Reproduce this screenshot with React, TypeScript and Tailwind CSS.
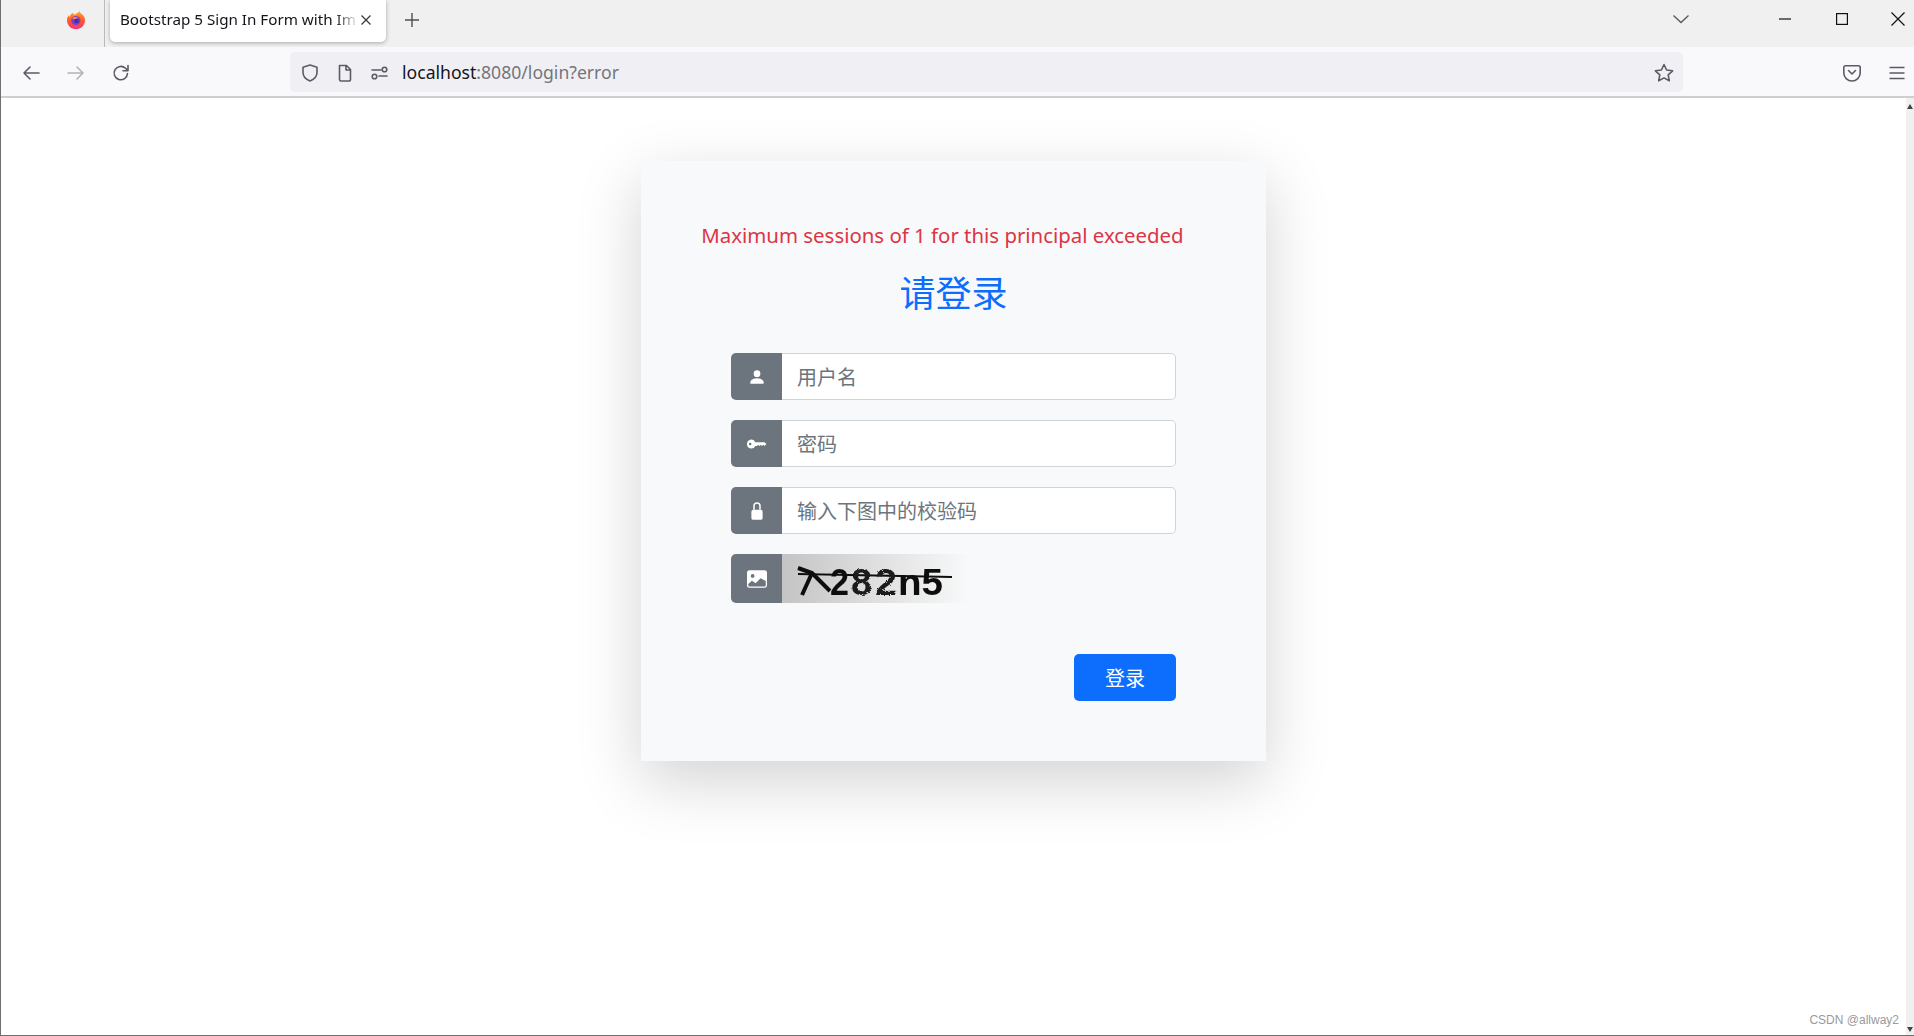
import React from "react";

const ff = { sans: "font-['Noto_Sans','Noto_Sans_CJK_SC',sans-serif]" };

function Firefox() {
  return (
    <svg width="20" height="20" viewBox="0 0 20 20">
      <defs>
        <linearGradient id="ffg" x1="0" y1="0" x2="0" y2="1">
          <stop offset="0" stopColor="#ffb01f" />
          <stop offset="0.5" stopColor="#ff5a2b" />
          <stop offset="1" stopColor="#f0377b" />
        </linearGradient>
      </defs>
      <path d="M13 0.8c.3 1.6 1.4 2.2 2.6 3.3 2 1.6 3.4 3.6 3.4 6.1 0 5-4 9-9 9s-9-4-9-9c0-2 .6-3.8 1.7-5.3.1 1 .5 1.6 1 2 .5-2.4 2.1-3.6 4-4.1-.5 1 -.3 1.6 .4 2 1.7-.6 3.4-1.7 5.9-4z" fill="url(#ffg)" />
      <circle cx="9.8" cy="10.5" r="4.6" fill="#7a3ec8" />
      <path d="M6 8.2c1.5-1.4 5-1.6 6.6.3-1.8-.5-2.6.3-3.4.8-1 .1-2.2-.4-3.2-1.1z" fill="#ff8a3c" />
      <circle cx="10.5" cy="11" r="2.3" fill="#4b2ba8" />
    </svg>
  );
}

const iconStroke = "#5b5b66";

function Icon({ children, size = 20 }: { children: React.ReactNode; size?: number }) {
  return (
    <svg width={size} height={size} viewBox="0 0 20 20" fill="none" stroke={iconStroke} strokeWidth="1.6" strokeLinecap="round" strokeLinejoin="round">
      {children}
    </svg>
  );
}

function BsInput({ placeholder, icon }: { placeholder: string; icon: React.ReactNode }) {
  return (
    <div className="flex h-[47px] w-full">
      <div className="flex w-[51px] shrink-0 items-center justify-center rounded-l-[5px] bg-[#6c757d]">{icon}</div>
      <input
        readOnly
        placeholder={placeholder}
        className="h-full min-w-0 flex-1 rounded-r-[5px] border border-[#ced4da] border-l-0 bg-white px-[15px] pt-[1px] text-[20px] outline-none placeholder:text-[#6c757d]"
      />
    </div>
  );
}

function Captcha() {
  const font = "'Liberation Sans',sans-serif";
  return (
    <svg width="188" height="49" viewBox="0 0 188 49" className="block">
      <defs>
        <linearGradient id="cap" x1="0" y1="0" x2="1" y2="0">
          <stop offset="0" stopColor="#c4c4c4" />
          <stop offset="0.55" stopColor="#e2e2e2" />
          <stop offset="1" stopColor="#f8f9fa" />
        </linearGradient>
        <filter id="soft" x="-5%" y="-5%" width="110%" height="110%">
          <feGaussianBlur stdDeviation="0.5" />
        </filter>
        <filter id="noisy" x="-5%" y="-5%" width="110%" height="110%">
          <feTurbulence type="fractalNoise" baseFrequency="0.7" numOctaves="2" seed="3" />
          <feDisplacementMap in="SourceGraphic" scale="3" />
          <feGaussianBlur stdDeviation="0.4" />
        </filter>
      </defs>
      <rect width="188" height="49" fill="url(#cap)" />
      <g filter="url(#soft)">
        <path d="M16 14 L30 19 L48 37 M30 19 L20 41" stroke="#111" strokeWidth="4" fill="none" />
        <text x="48" y="41" fontFamily={font} fontWeight="700" fontSize="36" fill="#111" textLength="19" lengthAdjust="spacingAndGlyphs">2</text>
        <text x="116" y="41" fontFamily={font} fontWeight="700" fontSize="36" fill="#111" textLength="45" lengthAdjust="spacingAndGlyphs">n5</text>
        <path d="M16 20 L170 23" stroke="#111" strokeWidth="2" />
      </g>
      <g filter="url(#noisy)">
        <text x="69" y="41" fontFamily={font} fontWeight="700" fontSize="37" fill="#1a1a1a" textLength="21" lengthAdjust="spacingAndGlyphs">8</text>
        <text x="93" y="41" fontFamily={font} fontWeight="700" fontSize="37" fill="#1a1a1a" textLength="22" lengthAdjust="spacingAndGlyphs">2</text>
      </g>
    </svg>
  );
}

export default function App() {
  return (
    <div className={`flex h-[1036px] w-[1914px] flex-col overflow-hidden border-l border-b border-[#6f6f6f] bg-white ${ff.sans}`}>
      {/* Tab strip */}
      <div className="flex h-[47px] shrink-0 items-start bg-[#f0f0f0]">
        <div className="flex h-[47px] w-[104px] items-center justify-end border-r border-[#b9b9b9] pr-[18px] pb-[8px]">
          <Firefox />
        </div>
        <div className="ml-[5px] flex h-[42px] w-[276px] items-center rounded-b-[5px] bg-white pl-[10px] pb-[2px] shadow-[0_1px_4px_rgba(0,0,0,0.3)]">
          <span className="-mt-[2px] w-[239px] whitespace-nowrap text-[15.2px] text-[#15141a] [mask-image:linear-gradient(to_right,black_90%,transparent)]">
            Bootstrap 5 Sign In Form with Im
          </span>
          <svg width="14" height="14" viewBox="0 0 14 14" stroke="#3a3a44" strokeWidth="1.3">
            <path d="M2.5 2.5l9 9M11.5 2.5l-9 9" />
          </svg>
        </div>
        <div className="ml-[18px] flex h-[40px] items-center">
          <svg width="16" height="16" viewBox="0 0 16 16" stroke="#4f4f58" strokeWidth="1.4">
            <path d="M8 1v14M1 8h14" />
          </svg>
        </div>
        <div className="flex-1" />
        <div className="flex h-[38px] items-center">
          <svg width="18" height="10" viewBox="0 0 18 10" fill="none" stroke="#5b5b66" strokeWidth="1.4" className="mr-[89px]">
            <path d="M1.5 1.5L9 8.5l7.5-7" />
          </svg>
          <svg width="12" height="2" viewBox="0 0 12 2" stroke="#111" strokeWidth="1.2" className="mr-[45px]">
            <path d="M0 1h12" />
          </svg>
          <svg width="12" height="12" viewBox="0 0 12 12" fill="none" stroke="#111" strokeWidth="1.2" className="mr-[43px]">
            <rect x="0.6" y="0.6" width="10.8" height="10.8" />
          </svg>
          <svg width="14" height="14" viewBox="0 0 14 14" stroke="#111" strokeWidth="1.2" className="mr-[9px]">
            <path d="M0.5 0.5l13 13M13.5 0.5l-13 13" />
          </svg>
        </div>
      </div>

      {/* Toolbar */}
      <div className="flex h-[51px] shrink-0 items-center border-b-2 border-[#cfcfd3] bg-[#f9f9fb]">
        <div className="flex w-[289px] items-center pl-[20px] pt-[2px]">
          <Icon>
            <path d="M18 10H3M9 4l-6 6 6 6" />
          </Icon>
          <div className="ml-[25px]">
            <svg width="20" height="20" viewBox="0 0 20 20" fill="none" stroke="#b3b3ba" strokeWidth="1.6" strokeLinecap="round" strokeLinejoin="round">
              <path d="M2 10h15M11 4l6 6-6 6" />
            </svg>
          </div>
          <div className="ml-[25px]">
            <Icon>
              <path d="M16.5 10.5a6.7 6.7 0 1 1-2-5.2L17 7.7M17 2.5v5.2h-5" />
            </Icon>
          </div>
        </div>
        <div className="flex h-[40px] w-[1393px] items-center rounded-[5px] bg-[#f0f0f4] pl-[10px] pt-[2px]">
          <Icon>
            <path d="M10 2l7 2.3v5c0 4.4-3 7.2-7 8.7-4-1.5-7-4.3-7-8.7v-5z" />
          </Icon>
          <div className="ml-[15px]">
            <Icon>
              <path d="M4.5 2.5h7l4 4v10a1.5 1.5 0 0 1-1.5 1.5H6a1.5 1.5 0 0 1-1.5-1.5zM11 2.5v4.500h4.500" />
            </Icon>
          </div>
          <div className="ml-[15px]">
            <Icon>
              <path d="M2 7h9M17 13H9" />
              <circle cx="14.500" cy="6.500" r="2.300" />
              <circle cx="4.500" cy="13.500" r="2.300" />
            </Icon>
          </div>
          <span className="ml-[12px] text-[17.6px] text-[#15141a]">
            localhost<span className="text-[#74747c]">:8080/login?error</span>
          </span>
          <div className="flex-1" />
          <svg width="22" height="22" viewBox="0 0 22 22" fill="none" stroke={iconStroke} strokeWidth="1.6" strokeLinejoin="round" className="mr-[8px]">
            <path d="M11 2.500l2.600 5.500 6 .8-4.400 4.100 1.100 5.900-5.300-2.900-5.300 2.900 1.100-5.900-4.400-4.100 6-.8z" />
          </svg>
        </div>
        <div className="flex-1" />
        <div className="mr-[9px] flex items-center gap-[27px] pt-[2px]">
          <Icon>
            <path d="M3.500 2.800h13a1.700 1.700 0 0 1 1.700 1.700v5.300a8.200 8.200 0 0 1-16.400 0V4.500a1.700 1.700 0 0 1 1.700-1.700z" />
            <path d="M6.500 7.500L10 11l3.500-3.500" />
          </Icon>
          <svg width="16" height="14" viewBox="0 0 16 14" stroke={iconStroke} strokeWidth="1.500">
            <path d="M0.500 1.500h15M0.500 7h15M0.500 12.500h15" />
          </svg>
        </div>
      </div>

      {/* Page */}
      <div className="relative flex min-h-0 flex-1">
        <div className="flex min-w-0 flex-1 justify-center pt-[63px]">
          <div className="flex h-[600px] w-[625px] flex-col items-center bg-[#f8f9fa] pt-[59px] shadow-[0_20px_60px_rgba(0,0,0,0.175)]">
            <p className="mr-[22px] h-[30px] whitespace-nowrap text-[20.4px] leading-[30px] text-[#dc3545]">Maximum sessions of 1 for this principal exceeded</p>
            <h3 className="mt-[23px] h-[42px] text-[36px] font-normal leading-[42px] text-[#0d6efd]">请登录</h3>
            <form className="mt-[38px] flex w-[445px] flex-col">
              <BsInput
                placeholder="用户名"
                icon={
                  <svg width="18" height="18" viewBox="0 0 16 16" fill="white">
                    <path d="M3 14s-1 0-1-1 1-4 6-4 6 3 6 4-1 1-1 1H3zm5-6a3 3 0 1 0 0-6 3 3 0 0 0 0 6z" />
                  </svg>
                }
              />
              <div className="mt-[20px]">
                <BsInput
                  placeholder="密码"
                  icon={
                    <svg width="20" height="20" viewBox="0 0 16 16" fill="white">
                      <path d="M3.500 11.500a3.500 3.500 0 1 1 3.163-5H14L15.500 8 14 9.500l-1-1-1 1-1-1-1 1-1-1-1 1H6.663a3.500 3.500 0 0 1-3.163 2zM2.500 9a1 1 0 1 0 0-2 1 1 0 0 0 0 2z" />
                    </svg>
                  }
                />
              </div>
              <div className="mt-[20px]">
                <BsInput
                  placeholder="输入下图中的校验码"
                  icon={
                    <svg width="20" height="20" viewBox="0 0 16 16" fill="white">
                      <path d="M8 1a3 3 0 0 1 3 3v3h-1.200V4a1.800 1.800 0 0 0-3.600 0v3H5V4a3 3 0 0 1 3-3z" />
                      <rect x="3.500" y="7" width="9" height="8" rx="1.500" />
                    </svg>
                  }
                />
              </div>
              <div className="mt-[20px] flex h-[49px]">
                <div className="flex w-[51px] shrink-0 items-center justify-center rounded-l-[5px] bg-[#6c757d]">
                  <svg width="20" height="20" viewBox="0 0 16 16" fill="white">
                    <path d="M.002 3a2 2 0 0 1 2-2h12a2 2 0 0 1 2 2v10a2 2 0 0 1-2 2h-12a2 2 0 0 1-2-2V3zm1 9v1a1 1 0 0 0 1 1h12a1 1 0 0 0 1-1V9.500l-3.777-1.947a.500.500 0 0 0-.577.093l-3.710 3.710-2.660-1.772a.500.500 0 0 0-.630.062L1.002 12zm5-6.500a1.500 1.500 0 1 0-3 0 1.500 1.500 0 0 0 3 0z" />
                  </svg>
                </div>
                <Captcha />
              </div>
              <div className="mt-[51px] flex justify-end">
                <button type="button" className="h-[47px] w-[102px] rounded-[5px] bg-[#0d6efd] pt-[2px] text-[20px] text-white">
                  登录
                </button>
              </div>
            </form>
          </div>
        </div>

        {/* Scrollbar */}
        <div className="flex w-[8px] shrink-0 flex-col items-center justify-between bg-[#f0f0f0]">
          <div className="mt-[6px] h-0 w-0 border-x-[3px] border-b-[5px] border-x-transparent border-b-[#444]" />
          <div className="mb-[3px] h-0 w-0 border-x-[3px] border-t-[5px] border-x-transparent border-t-[#444]" />
        </div>

        <span className="absolute right-[15px] bottom-[6px] font-['Liberation_Sans',sans-serif] text-[12px] text-[#9a9a9a]">CSDN @allway2</span>
      </div>
    </div>
  );
}
